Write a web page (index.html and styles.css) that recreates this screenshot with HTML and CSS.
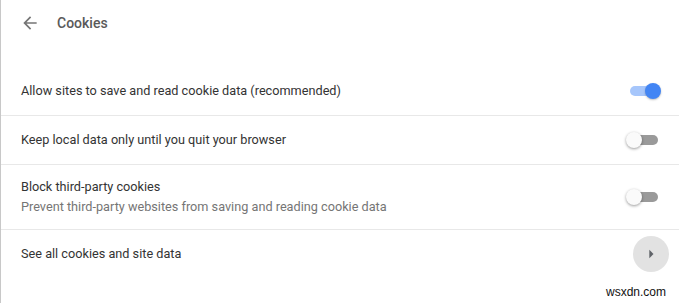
FILE: index.html
```html
<!DOCTYPE html>
<html>
<head>
<meta charset="utf-8">
<link rel="stylesheet" href="styles.css">
</head>
<body>
<div class="page">
  <div class="header">
    <svg class="back" viewBox="0 0 24 24" width="20" height="20"><path d="M20 11H7.83l5.59-5.59L12 4l-8 8 8 8 1.41-1.41L7.83 13H20v-2z" fill="#757575"/></svg>
    <span class="title">Cookies</span>
  </div>
  <div class="list">
    <div class="row">
      <span class="label">Allow sites to save and read cookie data (recommended)</span>
      <span class="toggle on"><span class="knob"></span></span>
    </div>
    <div class="row">
      <span class="label">Keep local data only until you quit your browser</span>
      <span class="toggle"><span class="knob"></span></span>
    </div>
    <div class="row tall">
      <div class="texts">
        <span class="label">Block third-party cookies</span>
        <span class="sub">Prevent third-party websites from saving and reading cookie data</span>
      </div>
      <span class="toggle"><span class="knob"></span></span>
    </div>
    <div class="row last">
      <span class="label">See all cookies and site data</span>
      <span class="circle"><svg viewBox="0 0 24 24" width="20" height="20"><path d="M10 17l5-5-5-5v10z" fill="#5f6368"/></svg></span>
    </div>
  </div>
  <span class="watermark">wsxdn.com</span>
</div>
</body>
</html>
```
FILE: styles.css
```css
html, body {
  margin: 0;
  padding: 0;
  background: #fff;
}
.page {
  position: relative;
  width: 679px;
  height: 303px;
  box-sizing: border-box;
  border-left: 1px solid #c8c8c8;
  font-family: Roboto, "Noto Sans", sans-serif;
  font-size: 12.7px;
  color: #333;
  overflow: hidden;
}
.header {
  height: 45px;
  display: flex;
  align-items: center;
  padding-left: 19px;
}
.back {
  display: block;
  margin-right: 17px;
}
.title {
  font-size: 14px;
  font-weight: 500;
  color: #5a5a5a;
}
.list {
  margin-top: 22px;
}
.row {
  height: 49px;
  box-sizing: border-box;
  display: flex;
  align-items: center;
  justify-content: space-between;
  padding: 0 21px 0 20px;
  border-bottom: 1px solid #e8e8e8;
}
.row.tall {
  height: 65px;
}
.row.last {
  height: 48px;
  border-bottom: none;
  padding-right: 10px;
}
.texts {
  display: flex;
  flex-direction: column;
}
.label {
  line-height: 20px;
}
.sub {
  line-height: 20px;
  color: #757575;
}
.toggle {
  position: relative;
  width: 28px;
  height: 10px;
  border-radius: 5px;
  background: #9a9a9a;
}
.toggle .knob {
  position: absolute;
  top: -3px;
  left: -4px;
  width: 16px;
  height: 16px;
  border-radius: 50%;
  background: #fafafa;
  box-shadow: 0 1px 3px rgba(0,0,0,0.4);
}
.toggle.on {
  background: #a6c6fb;
}
.toggle.on .knob {
  left: 15px;
  background: #4285f4;
  box-shadow: 0 1px 2px rgba(0,0,0,0.25);
}
.circle {
  width: 36px;
  height: 36px;
  border-radius: 50%;
  background: #e2e2e2;
  display: flex;
  align-items: center;
  justify-content: center;
}
.circle svg {
  display: block;
}
.watermark {
  position: absolute;
  left: 605px;
  top: 285px;
  font-family: "Liberation Sans", Arial, sans-serif;
  font-size: 12px;
  color: #111;
}
```
